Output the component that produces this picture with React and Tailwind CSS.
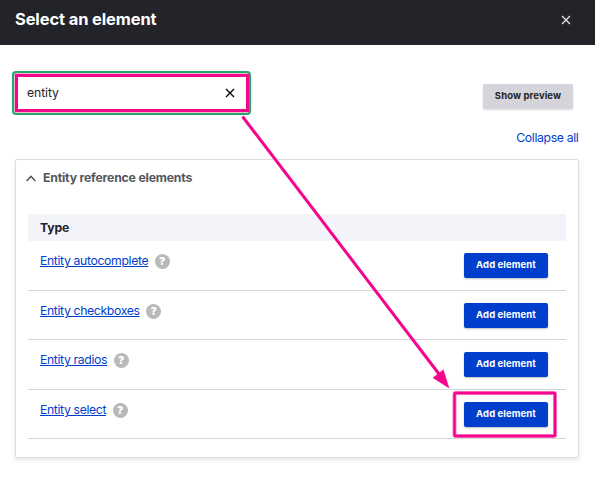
const rows = [
  { name: 'Entity autocomplete', height: 'h-[50px]' },
  { name: 'Entity checkboxes', height: 'h-[49px]' },
  { name: 'Entity radios', height: 'h-[50px]' },
  { name: 'Entity select', height: 'h-[49px]' },
];

function Cross({ className }) {
  return (
    <svg className={className} viewBox="0 0 10 10" fill="none" stroke="currentColor" strokeWidth="1.3">
      <path d="M1 1l8 8M9 1L1 9" />
    </svg>
  );
}

function Row({ name, height }) {
  return (
    <div className={`${height} flex items-start justify-between border-b border-[#d3d4d9] pl-3 pr-[18px] pt-3`}>
      <div className="flex items-start">
        <a href="#" className="text-[12.25px] leading-4 tracking-[-0.37px] text-[#003ecc] underline decoration-1 underline-offset-1">{name}</a>
        <span className="ml-[6.5px] mt-[1px] flex size-[15px] items-center justify-center rounded-full bg-[#b9b9b9] pt-px text-[10.5px] font-black leading-none text-white">?</span>
      </div>
      <button className="h-[25px] w-[84px] rounded-[2px] bg-[#003ecc] pb-[2px] text-[9.5px] font-bold leading-none tracking-[0.1px] text-white shadow-[0_1px_2px_rgba(0,0,0,0.25)]">Add element</button>
    </div>
  );
}

export default function App() {
  return (
    <div className="relative flex h-[480px] w-[595px] flex-col overflow-hidden whitespace-nowrap bg-white font-['Inter',sans-serif] text-[#232429]">
      <header className="flex h-[45px] shrink-0 items-start justify-between bg-[#232429] pl-[15px] pr-[24px] pt-[9px] text-white">
        <h1 className="text-[16.5px] font-bold leading-5 tracking-[-0.13px]">Select an element</h1>
        <Cross className="mt-[6px] size-[10px] text-[#e6e6e8]" />
      </header>

      <div className="mt-[26px] flex h-[45px] shrink-0 items-start justify-between pl-[11.5px] pr-[22px]">
        <div className="h-[44px] w-[239.5px] rounded-[4px] border-2 border-[#26a769] bg-[#f3b6d2] py-px pl-px">
          <div className="flex h-full items-center justify-between border-[3px] border-[#f5058c] bg-white pl-[9.5px] pr-[11px]">
            <span className="text-[12.25px] leading-4 tracking-[-0.1px]">entity</span>
            <Cross className="size-[10px] text-black" />
          </div>
        </div>
        <button className="mt-[13px] h-[25px] w-[90px] rounded-[2px] bg-[#d4d4da] pb-[2px] text-[9.5px] font-bold leading-none tracking-[0.1px] shadow-[0_1px_2px_rgba(0,0,0,0.15)]">Show preview</button>
      </div>

      <div className="mt-[14px] flex h-[29px] shrink-0 justify-end pr-[16.5px]">
        <a href="#" className="text-[12.25px] leading-4 tracking-[-0.35px] text-[#003ecc]">Collapse all</a>
      </div>

      <section className="ml-[15px] h-[299px] w-[564px] shrink-0 rounded-[2px] border border-[#dedfe4] px-3 shadow-[0_2px_4px_rgba(0,0,0,0.1)]">
        <div className="-ml-[2px] flex h-[54px] items-start pt-[10px] text-[#55565b]">
          <svg className="mt-[5px] h-[7px] w-[10px]" viewBox="0 0 10 7" fill="none" stroke="currentColor" strokeWidth="1.5">
            <path d="M.6 6L5 1.4 9.4 6" />
          </svg>
          <h2 className="ml-[7px] text-[12.25px] font-bold leading-4 tracking-[-0.2px]">Entity reference elements</h2>
        </div>
        <div className="flex h-[27px] items-center bg-[#f3f4f9] pl-3 pt-px text-[12.25px] font-bold leading-4 tracking-[-0.2px]">Type</div>
        {rows.map((row) => <Row key={row.name} {...row} />)}
      </section>

      <svg className="pointer-events-none absolute left-0 top-0 h-[480px] w-[595px]" viewBox="0 0 595 480" fill="none">
        <path d="M242.5 116.500L439 374" stroke="#f5058c" strokeWidth="3" />
        <path d="M449 388L433 377.800L443.300 369.800Z" fill="#f5058c" stroke="#f5058c" strokeWidth=".5" />
        <rect x="454.500" y="393" width="100.500" height="43" rx="1" stroke="#f5058c" strokeOpacity=".5" strokeWidth="4" />
        <rect x="454.500" y="393" width="100.500" height="43" rx="1" stroke="#f5058c" strokeWidth="2.400" />
      </svg>
    </div>
  );
}
